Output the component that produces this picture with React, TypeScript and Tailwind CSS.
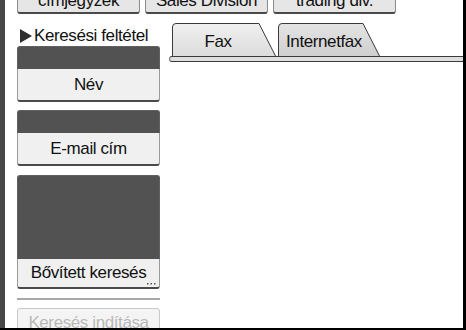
import React from 'react';

const font = { fontFamily: '"Liberation Sans", Arial, sans-serif' };

function TopButton({ label }: { label: string }) {
  return (
    <div className="w-[123px] h-[14px] overflow-hidden bg-[#e6e6e6] border-x border-[#8a8a8a] border-b-2 border-b-[#4a4a4a] rounded-b-[3px] flex justify-center">
      <span className="block text-[17px] leading-[17px] -mt-[8px] tracking-[-0.4px] text-[#111]">{label}</span>
    </div>
  );
}

function Tab({ label, width, active }: { label: string; width: number; active?: boolean }) {
  const w = width;
  return (
    <div className="relative h-[33px] shrink-0" style={{ width: w }}>
      <svg className="absolute inset-0" width={w} height={33} viewBox={`0 0 ${w} 33`}>
        <defs>
          <linearGradient id={`g-${label}`} x1="0" y1="0" x2="0" y2="1">
            <stop offset="0" stopColor={active ? '#e4e4e4' : '#f0f0f0'} />
            <stop offset="1" stopColor={active ? '#cfcfcf' : '#dcdcdc'} />
          </linearGradient>
        </defs>
        <path
          d={`M0.5 33 L0.5 4 Q0.5 0.5 4 0.5 L${w - 17} 0.5 L${w - 0.5} 33`}
          fill={`url(#g-${label})`}
          stroke="#3a3a3a"
          strokeWidth="1"
        />
      </svg>
      <span
        className={`relative block text-[17px] leading-[18px] tracking-[-0.4px] text-[#111] pt-[10px] ${active ? 'pl-[8px]' : 'text-center pr-[12px]'}`}
      >
        {label}
      </span>
    </div>
  );
}

function Field({ label, boxH, btnH = 32, more }: { label: string; boxH: number; btnH?: number; more?: boolean }) {
  return (
    <div className="flex flex-col">
      <div className="bg-[#525252] rounded-t-[3px] border-x border-t border-[#606060]" style={{ height: boxH }} />
      <div
        className="relative bg-[#f0f0f0] border-x border-[#9a9a9a] border-b-2 border-b-[#4a4a4a] rounded-b-[3px] flex items-center justify-center"
        style={{ height: btnH }}
      >
        <span className="text-[17px] leading-[18px] tracking-[-0.4px] text-[#111]">{label}</span>
        {more && (
          <svg width="9" height="2" viewBox="0 0 9 2" className="absolute right-[3px] bottom-[2px]">
            <rect x="0" y="0" width="1.5" height="1.5" fill="#555" />
            <rect x="3.5" y="0" width="1.5" height="1.5" fill="#555" />
            <rect x="7" y="0" width="1.5" height="1.5" fill="#555" />
          </svg>
        )}
      </div>
    </div>
  );
}

export default function App() {
  return (
    <div
      className="w-[466px] h-[330px] overflow-hidden bg-white flex border-b-2 border-black"
      style={font}
    >
      <div className="w-[5px] shrink-0 bg-[#474747]" />
      <div className="flex-1 flex flex-col border-r-[3px] border-black">
        <div className="flex gap-[5px] pl-[12px]">
          <TopButton label="címjegyzék" />
          <TopButton label="Sales Division" />
          <TopButton label="trading div." />
        </div>
        <div className="h-[2px] bg-[#a6a6a6] ml-[5px] mt-[4px]" />
        <div className="flex flex-1 pl-[12px]">
          <div className="w-[143px] shrink-0 flex flex-col">
            <div className="flex items-center h-[18px] mt-[9px]">
              <svg width="14" height="14" viewBox="0 0 14 14" className="ml-[3px] shrink-0">
                <polygon points="0,0 12,7 0,14" fill="#2e2e2e" />
              </svg>
              <span className="text-[17px] leading-[18px] tracking-[-0.4px] text-[#111]">Keresési feltétel</span>
            </div>
            <div className="mt-[1px] flex flex-col">
              <Field label="Név" boxH={23} btnH={33} />
              <div className="mt-[8px]">
                <Field label="E-mail cím" boxH={23} btnH={33} />
              </div>
              <div className="mt-[9px]">
                <Field label="Bővített keresés" boxH={84} btnH={30} more />
              </div>
            </div>
            <div className="h-[2px] bg-[#a8a8a8] mt-[9px]" />
            <div className="mt-[8px] h-[30px] bg-[#f4f4f4] border border-[#c8c8c8] rounded-[3px] flex items-center justify-center">
              <span className="text-[17px] leading-[18px] tracking-[-0.4px] text-[#b8b8b8]">Keresés indítása</span>
            </div>
          </div>
          <div className="flex-1 flex flex-col pl-[9px] pt-[5px]">
            <div className="flex pl-[3px] gap-[2px]">
              <Tab label="Fax" width={104} />
              <Tab label="Internetfax" width={102} active />
            </div>
            <div className="h-[6px] bg-[#dedede] border-y border-[#3a3a3a] rounded-l-[3px] border-l border-l-[#777]" />
          </div>
        </div>
      </div>
    </div>
  );
}
